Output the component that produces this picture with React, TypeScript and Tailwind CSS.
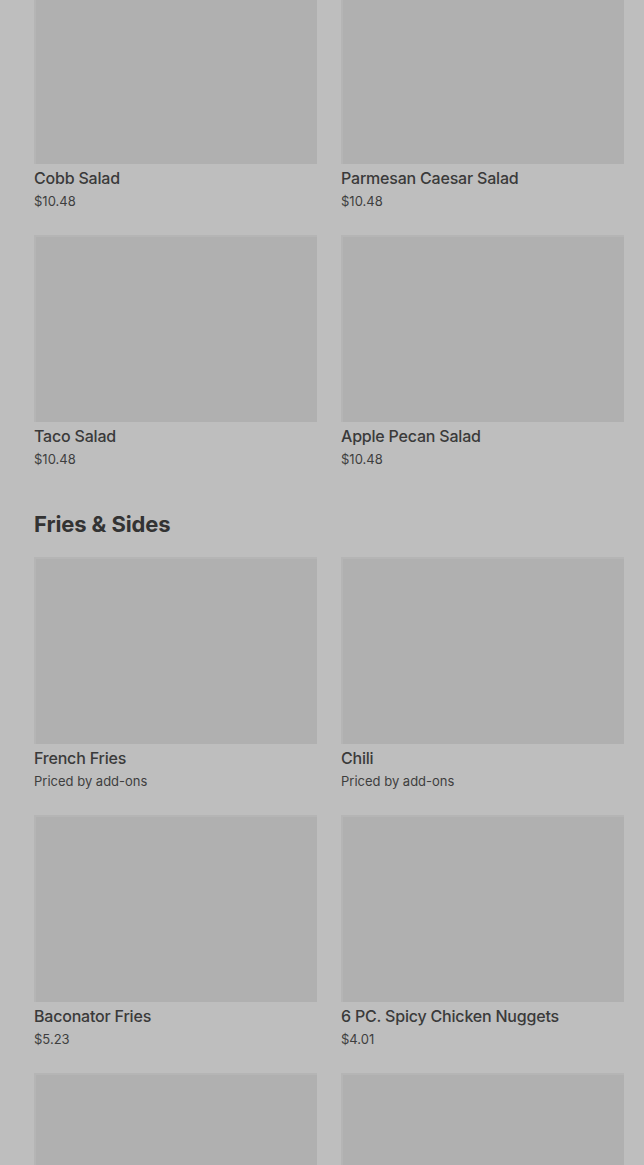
import React from "react";

type Item = { name: string; price: string };

const salads: Item[] = [
  { name: "Cobb Salad", price: "$10.48" },
  { name: "Parmesan Caesar Salad", price: "$10.48" },
  { name: "Taco Salad", price: "$10.48" },
  { name: "Apple Pecan Salad", price: "$10.48" },
];

const fries: Item[] = [
  { name: "French Fries", price: "Priced by add-ons" },
  { name: "Chili", price: "Priced by add-ons" },
  { name: "Baconator Fries", price: "$5.23" },
  { name: "6 PC. Spicy Chicken Nuggets", price: "$4.01" },
  { name: "", price: "" },
  { name: "", price: "" },
];

function Card({ item }: { item: Item }) {
  return (
    <div className="flex flex-col pb-[24px]">
      <div className="h-[187px] bg-[#b0b0b0] border-t-[2px] border-l-[2px] border-[#b5b5b5]" />
      <div className="mt-[2px] text-[16px] leading-[25px] font-medium tracking-[-0.2px] text-[#3a3a3a]">{item.name}</div>
      <div className="text-[13px] leading-[20px] text-[#3e3e3e]">{item.price}</div>
    </div>
  );
}

export default function App() {
  return (
    <div
      className="w-[644px] h-[1165px] overflow-hidden bg-[#bebebe]"
      style={{ fontFamily: "Inter, 'Liberation Sans', sans-serif" }}
    >
      <div className="pl-[34px] pr-[20px] mt-[-23px]">
        <div className="grid grid-cols-2 gap-x-[24px]">
          {salads.map((it, i) => (
            <Card key={i} item={it} />
          ))}
        </div>
        <h2 className="pt-[15px] mb-[17px] text-[22px] leading-[32px] font-bold tracking-[-0.1px] text-[#333333]">
          Fries &amp; Sides
        </h2>
        <div className="grid grid-cols-2 gap-x-[24px]">
          {fries.map((it, i) => (
            <Card key={i} item={it} />
          ))}
        </div>
      </div>
    </div>
  );
}
